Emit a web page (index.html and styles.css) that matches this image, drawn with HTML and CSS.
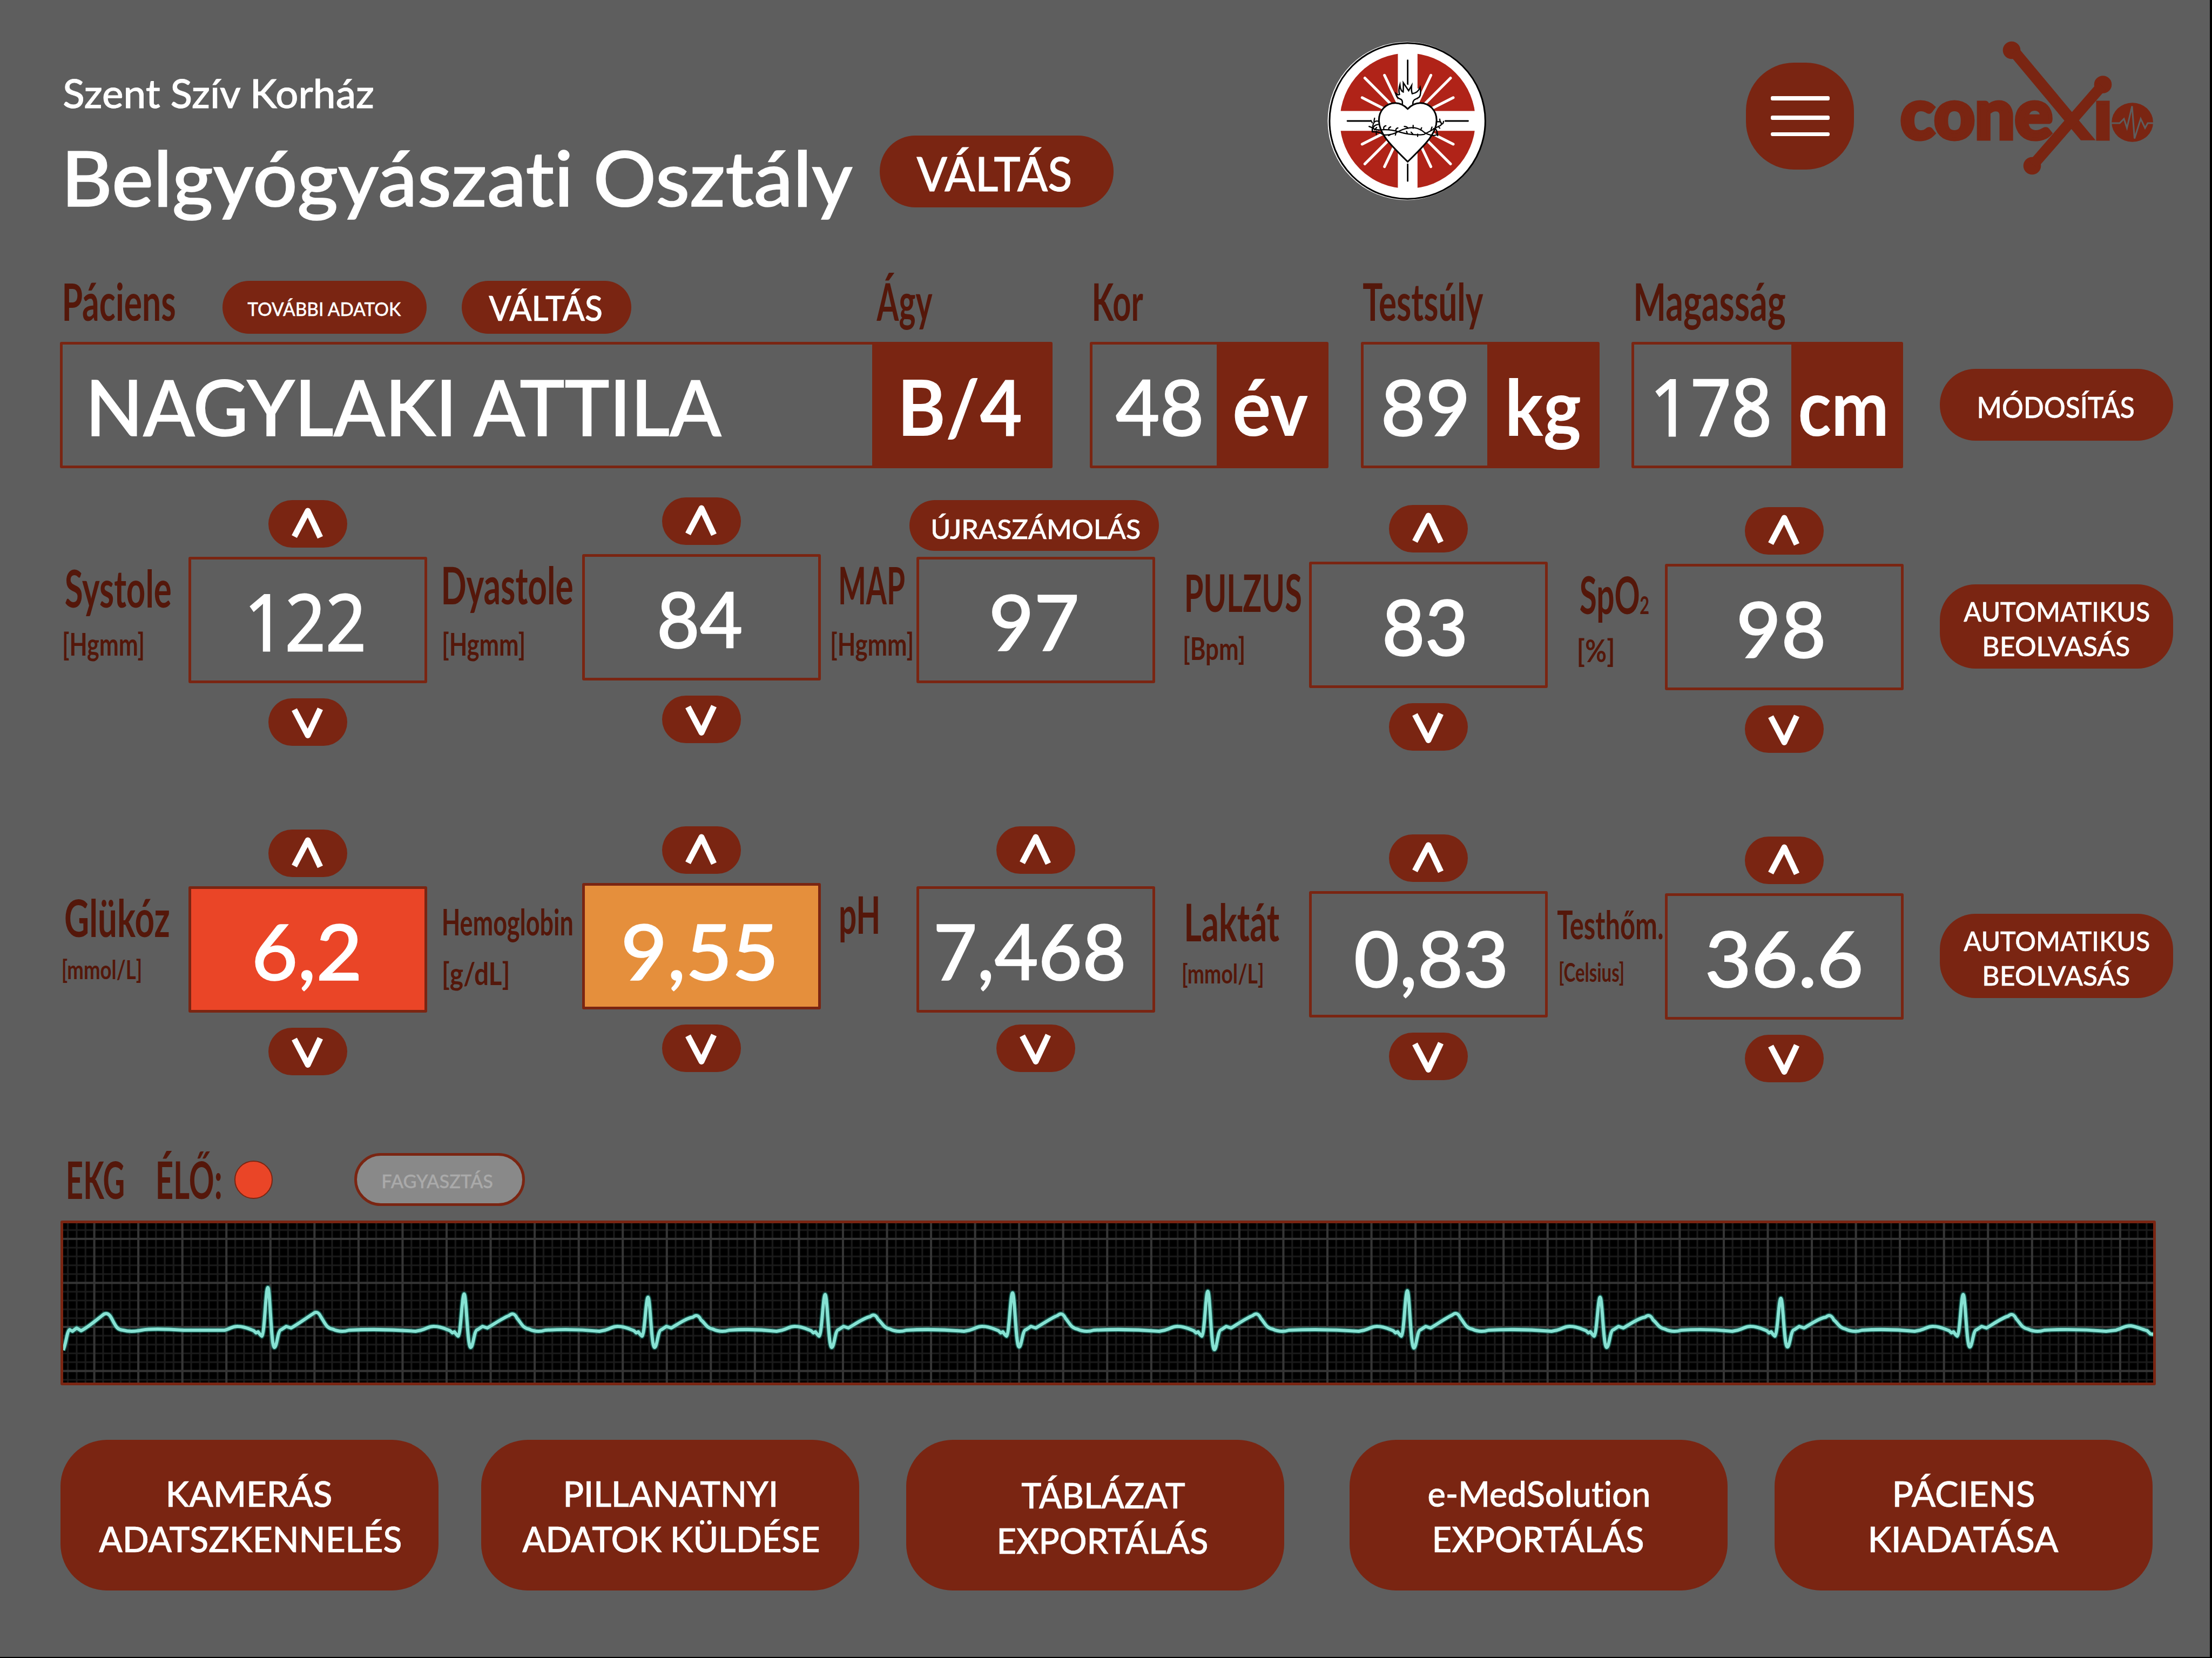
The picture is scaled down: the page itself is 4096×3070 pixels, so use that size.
FILE: index.html
```html
<!DOCTYPE html>
<html lang="hu">
<head>
<meta charset="utf-8">
<title>Conexio – Belgyógyászati Osztály</title>
<link rel="stylesheet" href="styles.css">
</head>
<body>
<svg class="defs" width="0" height="0" aria-hidden="true">
  <symbol id="up" viewBox="0 0 146 88"><path d="M48 67.5 L73 20 L96 69" fill="none" stroke="#fff" stroke-width="11" stroke-linejoin="round"/></symbol>
  <symbol id="down" viewBox="0 0 146 88"><path d="M48 21 L73 68.5 L96 19.500" fill="none" stroke="#fff" stroke-width="11" stroke-linejoin="round"/></symbol>
</svg>
<main class="screen">
  <header class="header">
    <div class="titles">
      <p class="hospital"><span data-w="575">Szent Szív Korház</span></p>
      <h1 class="ward"><span data-w="1454">Belgyógyászati Osztály</span></h1>
    </div>
    <button class="pill ward-switch"><span data-w="286">VÁLTÁS</span></button>
    <svg class="emblem" viewBox="127 123 1163 1164">
      <circle cx="708" cy="705" r="580" fill="#fff"/>
      <circle cx="713" cy="705" r="571" fill="#fff" stroke="#000" stroke-width="12"/>
      <circle cx="715" cy="704" r="497" fill="#b02318"/>
      <path d="M643 180h144v452h450v145H787v450H643V777H190V632h453z" fill="#fff"/>
      <g stroke="#fff" stroke-width="20" stroke-linecap="round">
        <path d="M545 370 L660 610 M401 390 L620 610 M381 534 L560 625 M885 370 L770 610 M1029 390 L810 610 M1049 534 L870 625"/>
        <path d="M381 875 L560 785 M401 1020 L620 800 M545 1040 L640 840 M1049 875 L870 785 M1029 1020 L810 800 M885 1040 L790 840"/>
      </g>
      <g fill="none" stroke="#000" stroke-width="11" stroke-linecap="round" stroke-linejoin="round">
        <path d="M715 260V445 M715 1022V1145 M273 705H445 M991 705H1158"/>
        <path fill="#fff" stroke="none" d="M680 590 Q680 540 640 530 L640 510 L690 430 L800 470 L808 510 L755 560 L752 590z"/>
        <path fill="#fff" stroke-miterlimit="8" stroke-linejoin="miter" stroke-width="10" d="M676 585 Q680 550 662 545 Q635 538 628 503 Q645 518 655 510 Q646 480 658 440 Q662 485 682 492 Q684 460 683 425 L722 483 L744 445 Q740 480 748 505 Q790 500 806 458 Q816 505 800 530 Q785 540 765 549 Q752 560 753 580"/>
        <path fill="#fff" stroke-width="12" d="M715 617 C690 590 660 573 625 573 C555 573 504 630 504 700 C504 800 590 880 715 1004 C840 880 927 800 927 700 C927 630 876 573 806 573 C770 573 740 590 715 617z"/>
        <g stroke-width="9">
          <path d="M500 707 Q470 700 462 730 Q448 770 500 770 M498 730 Q455 735 455 785 M455 785 Q500 780 535 805 Q590 815 650 780 Q750 730 820 775 Q850 805 905 812 L935 805"/>
          <path d="M500 772 Q580 762 650 785 Q750 815 835 803 Q890 775 940 745 Q975 735 955 710 L930 710 M905 760 Q935 765 930 800"/>
          <path d="M446 702 L455 718 M472 685 L468 708 M432 745 L462 757 M487 753 L472 770 M485 805 L485 780 M455 785 L455 760 M540 765 Q535 745 555 740 M577 768 Q572 755 590 748 M628 773 Q628 760 643 756 M690 745 Q710 745 717 758 M755 737 V758 M817 755 L810 770 M893 750 L885 775 M707 782 L712 797 M740 787 L752 800 M788 802 V818 M575 812 L590 804 M630 787 L625 808 M950 692 L953 712 M978 708 Q975 730 962 728 M940 745 L950 758 M935 812 L930 790"/>
        </g>
      </g>
    </svg>
    <button class="menu" aria-label="Menü"><i></i><i></i><i></i></button>
    <svg class="logo" viewBox="3512 66 480 266">
      <defs><clipPath id="leg"><rect x="3512" y="66" width="480" height="193.800"/></clipPath></defs>
      <g fill="#7a2512" stroke="none">
        <circle cx="3724" cy="93" r="16.300"/><circle cx="3893" cy="156.500" r="16.300"/><circle cx="3762" cy="307" r="16.300"/>
        <text class="logo-text" x="3518" y="257" textLength="282" lengthAdjust="spacingAndGlyphs">cone</text>
        <text class="logo-text" x="3876" y="257" textLength="34" lengthAdjust="spacingAndGlyphs">ı</text>
        <ellipse cx="3947.600" cy="226.500" rx="38.400" ry="36.300"/>
      </g>
      <path clip-path="url(#leg)" d="M3729 96 L3881 278" stroke="#7a2512" stroke-width="21"/>
      <path d="M3891 159 L3764 305" stroke="#7a2512" stroke-width="20"/>
      <path d="M3908 228h16l8-8 5.500 17L3947 196.500l4.500 60L3963 220l8 17 5-9h11" fill="none" stroke="#5e5e5e" stroke-width="3"/>
    </svg>
  </header>

  <section class="patient">
    <div class="field name">
      <div class="head">
        <span class="label" data-w="205">Páciens</span>
        <button class="pill more"><span data-w="286">TOVÁBBI ADATOK</span></button>
        <button class="pill swap"><span data-w="209">VÁLTÁS</span></button>
        <span class="label bed" data-w="104">Ágy</span>
      </div>
      <div class="box"><div class="value"><span data-w="1172">NAGYLAKI ATTILA</span></div><div class="unit"><span data-w="218">B/4</span></div></div>
    </div>
    <div class="field age">
      <div class="head"><span class="label" data-w="91">Kor</span></div>
      <div class="box"><div class="value"><span data-w="158">48</span></div><div class="unit"><span data-w="136">év</span></div></div>
    </div>
    <div class="field weight">
      <div class="head"><span class="label" data-w="223">Testsúly</span></div>
      <div class="box"><div class="value"><span data-w="153">89</span></div><div class="unit"><span data-w="132">kg</span></div></div>
    </div>
    <div class="field height">
      <div class="head"><span class="label" data-w="277">Magasság</span></div>
      <div class="box"><div class="value"><span class="plain" data-w="210">178</span></div><div class="unit"><span data-w="158">cm</span></div></div>
    </div>
    <button class="pill modify"><span data-w="288">MÓDOSÍTÁS</span></button>
  </section>

  <section class="vitals">
    <div class="caption systole"><span class="label" data-w="195">Systole</span><span class="measure" data-w="147">[Hgmm]</span></div>
    <div class="stepper systole"><button class="step"><svg><use href="#up"/></svg></button><div class="reading"><span class="plain" data-w="210">122</span></div><button class="step"><svg><use href="#down"/></svg></button></div>
    <div class="caption diastole"><span class="label" data-w="239">Dyastole</span><span class="measure" data-w="149">[Hgmm]</span></div>
    <div class="stepper diastole"><button class="step"><svg><use href="#up"/></svg></button><div class="reading"><span data-w="152">84</span></div><button class="step"><svg><use href="#down"/></svg></button></div>
    <div class="caption map"><span class="label" data-w="119">MAP</span><span class="measure" data-w="149">[Hgmm]</span></div>
    <div class="stepper map"><button class="pill recalc"><span data-w="384">ÚJRASZÁMOLÁS</span></button><div class="reading"><span data-w="158">97</span></div></div>
    <div class="caption pulse"><span class="label" data-w="212">PULZUS</span><span class="measure" data-w="110">[Bpm]</span></div>
    <div class="stepper pulse"><button class="step"><svg><use href="#up"/></svg></button><div class="reading"><span data-w="148">83</span></div><button class="step"><svg><use href="#down"/></svg></button></div>
    <div class="caption oxygen"><div class="formula"><span class="label" data-w="109">SpO</span><span class="sub" data-w="16">2</span></div><span class="measure" data-w="64">[%]</span></div>
    <div class="stepper oxygen"><button class="step"><svg><use href="#up"/></svg></button><div class="reading"><span data-w="155">98</span></div><button class="step"><svg><use href="#down"/></svg></button></div>
    <button class="pill auto"><span data-w="344">AUTOMATIKUS</span><span data-w="269">BEOLVASÁS</span></button>
  </section>

  <section class="vitals labs">
    <div class="caption glucose"><span class="label" data-w="192">Glükóz</span><span class="measure" data-w="145">[mmol/L]</span></div>
    <div class="stepper glucose"><button class="step"><svg><use href="#up"/></svg></button><div class="reading critical"><span data-w="192">6,2</span></div><button class="step"><svg><use href="#down"/></svg></button></div>
    <div class="caption hemoglobin"><span class="label" data-w="239">Hemoglobin</span><span class="measure" data-w="120">[g/dL]</span></div>
    <div class="stepper hemoglobin"><button class="step"><svg><use href="#up"/></svg></button><div class="reading warning"><span data-w="278">9,55</span></div><button class="step"><svg><use href="#down"/></svg></button></div>
    <div class="caption ph"><span class="label" data-w="70">pH</span></div>
    <div class="stepper ph"><button class="step"><svg><use href="#up"/></svg></button><div class="reading"><span data-w="346">7,468</span></div><button class="step"><svg><use href="#down"/></svg></button></div>
    <div class="caption lactate"><span class="label" data-w="172">Laktát</span><span class="measure" data-w="147">[mmol/L]</span></div>
    <div class="stepper lactate"><button class="step"><svg><use href="#up"/></svg></button><div class="reading"><span data-w="277">0,83</span></div><button class="step"><svg><use href="#down"/></svg></button></div>
    <div class="caption temp"><span class="label" data-w="195">Testhőm.</span><span class="measure" data-w="118">[Celsius]</span></div>
    <div class="stepper temp"><button class="step"><svg><use href="#up"/></svg></button><div class="reading"><span data-w="285">36.6</span></div><button class="step"><svg><use href="#down"/></svg></button></div>
    <button class="pill auto"><span data-w="344">AUTOMATIKUS</span><span data-w="269">BEOLVASÁS</span></button>
  </section>

  <section class="ecg">
    <div class="ecg-head">
      <span class="label" data-w="103">EKG</span>
      <span class="label live" data-w="117">ÉLŐ:</span>
      <i class="dot"></i>
      <button class="pill freeze"><span data-w="203">FAGYASZTÁS</span></button>
    </div>
    <svg class="monitor" viewBox="117 2265 3870 295" preserveAspectRatio="none">
      <defs>
        <pattern id="minor" x="174.600" y="2293.900" width="16.310" height="16.310" patternUnits="userSpaceOnUse"><path d="M0 0H16.310M0 0V16.310M16.310 0V16.310M0 16.310H16.310" stroke="#1b1b1b" stroke-width="3"/></pattern>
        <pattern id="major" x="174.600" y="2293.900" width="81.550" height="81.550" patternUnits="userSpaceOnUse"><path d="M0 0H81.550M0 0V81.550M81.550 0V81.550M0 81.550H81.550" stroke="#353535" stroke-width="4"/></pattern>
      </defs>
      <rect x="117" y="2265" width="3870" height="295" fill="#000"/>
      <rect x="117" y="2265" width="3870" height="295" fill="url(#minor)"/>
      <rect x="117" y="2265" width="3870" height="295" fill="url(#major)"/>
      <path class="glow trace"/>
      <path class="trace"/>
    </svg>
  </section>

  <footer class="actions">
    <button class="action"><span data-w="303">KAMERÁS</span><span data-w="560">ADATSZKENNELÉS</span></button>
    <button class="action send"><span data-w="389">PILLANATNYI</span><span data-w="550">ADATOK KÜLDÉSE</span></button>
    <button class="action table"><span data-w="304">TÁBLÁZAT</span><span data-w="386">EXPORTÁLÁS</span></button>
    <button class="action med"><span data-w="408">e-MedSolution</span><span data-w="387">EXPORTÁLÁS</span></button>
    <button class="action discharge"><span data-w="259">PÁCIENS</span><span data-w="349">KIADATÁSA</span></button>
  </footer>
</main>
<script src="app.js"></script>
</body>
</html>
```
FILE: styles.css
```css
* { box-sizing: border-box; margin: 0; padding: 0; }
html, body { background: #5e5e5e; }
body { font-family: "Lato", "Open Sans", sans-serif; font-weight: 500; color: #fff; font-variant-ligatures: none; }
button { font: inherit; font-variant-ligatures: none; color: inherit; border: 0; flex: none; }
.defs { display: block; }
[data-w] { display: inline-block; white-space: nowrap; transform-origin: 0 50%; flex: none; -webkit-text-stroke: 0.011em currentColor; }

.screen {
  width: 4096px; height: 3070px; overflow: hidden;
  background: #5e5e5e; border-right: 4px solid #000; border-bottom: 2px solid #000;
}

.pill {
  display: flex; flex-direction: column; align-items: center; justify-content: center;
  background: #7a2512; border-radius: 66px;
}

/* header */
.header { display: flex; align-items: flex-start; height: 500px; }
.titles { width: 1629px; padding: 128px 0 0 118px; flex: none; }
.hospital { font-size: 73px; line-height: 88px; }
.ward { margin-top: 26px; font-size: 142px; line-height: 170px; font-weight: 500; padding-left: 7px; }
.ward-switch { width: 433px; height: 133px; margin-top: 251px; padding: 6px 11px 0 0; font-size: 86px; line-height: 86px; }
.emblem { width: 294px; height: 294px; margin: 77px 0 0 396px; flex: none; }
.menu {
  display: flex; flex-direction: column; justify-content: flex-start; align-items: stretch;
  width: 200px; height: 198px; margin: 116px 0 0 481px; border-radius: 89px; background: #7a2512;
  padding: 62px 45px 0 46px;
}
.menu i { display: block; height: 7.500px; border-radius: 3px; background: #fff; margin-bottom: 28.500px; flex: none; }
.menu i + i { margin-bottom: 23px; }
.logo { width: 480px; height: 266px; margin: 66px 0 0 80px; flex: none; }
.logo-text { font-family: "Lato", sans-serif; font-weight: 900; font-size: 129px; stroke: #7a2512; stroke-width: 7px; }

/* patient data */
.patient { display: flex; align-items: flex-start; height: 367px; padding-left: 111px; }
.field { flex: none; }
.head { display: flex; align-items: flex-start; height: 133px; }
.label { font-size: 95px; line-height: 114px; font-weight: 700; color: #54170a; }
.box { display: flex; height: 233.500px; border: 5px solid #7a2512; border-radius: 3px; font-size: 144px; line-height: 173px; }
.value, .unit { padding-top: 27px; }
.value { flex: 1; }
.unit { background: #7a2512; font-weight: 700; flex: none; }
.unit [data-w], .label[data-w], .measure[data-w], .sub[data-w] { -webkit-text-stroke-width: 0; }
.plain[data-w] { font-family: "Open Sans", sans-serif; -webkit-text-stroke-width: 0.022em; }
.name { width: 1838px; }
.name .head { padding-left: 8px; }
.more { width: 378px; height: 98px; margin: 20px 0 0 88px; padding-top: 5px; font-size: 35.500px; line-height: 40px; }
.swap { width: 314px; height: 98px; margin: 20px 0 0 65px; padding-right: 3px; font-size: 63px; line-height: 63px; }
.bed { margin-left: 454px; }
.name .value { padding-left: 53px; }
.name .unit { width: 329px; padding-left: 57px; }
.age { width: 442px; margin-left: 69px; }
.age .head, .height .head { padding-left: 8px; }
.age .value { padding-left: 43px; }
.age .unit { width: 202px; padding-left: 33px; }
.weight { width: 442px; margin-left: 60px; }
.weight .head { padding-left: 4px; }
.weight .value { padding-left: 37px; }
.weight .unit { width: 203px; padding-left: 40px; }
.height { width: 503px; margin-left: 59px; }
.height .value { padding-left: 40px; }
.height .unit { width: 202px; padding-left: 16px; }
.modify { width: 432px; height: 133px; margin: 183px 0 0 68px; padding-top: 8px; font-size: 54px; line-height: 54px; }

/* vital signs */
.vitals {
  display: grid; align-items: start; height: 610px; margin-top: 53px; padding-left: 111px;
  grid-template-columns: 237.500px 442.500px 287px 442px 177px 442px 284.500px 442.500px 217px 442px 67px 432px;
}
.labs { height: 596px; margin-top: 0; }
.stepper { display: flex; flex-direction: column; align-items: center; }
.step { width: 146px; height: 88px; border-radius: 44px; background: #7a2512; }
.step svg { display: block; width: 146px; height: 88px; }
.reading {
  width: 442px; height: 234px; margin: 17px 0 28px; padding-top: 27px; border: 5px solid #7a2512; border-radius: 3px;
  font-size: 144px; line-height: 173px;
}
.critical { background: #ea4527; }
.warning { background: #e58f3c; }
.caption { display: flex; flex-direction: column; align-items: flex-start; }
.measure { font-size: 58px; line-height: 70px; font-weight: 700; color: #54170a; margin-top: 12px; }

.caption.systole { padding: 111px 0 0 10px; }
.systole .measure { margin-left: -3px; }
.stepper.systole { padding-top: 6px; }
.systole .reading { padding-left: 109px; }
.caption.diastole { padding: 105px 0 0 30px; }
.diastole .measure, .map .measure { margin-top: 18px; }
.stepper.diastole { padding-top: 1px; }
.diastole .reading { padding-left: 138px; }
.caption.map { padding: 105px 0 0 36px; }
.map .measure { margin-left: -16px; }
.stepper.map { padding-top: 6px; }
.map .reading { margin-top: 11px; padding-left: 135px; }
.recalc { width: 462px; height: 94px; align-self: flex-start; margin-left: -13px; padding: 11px 0 0 8px; font-size: 51px; line-height: 51px; }
.caption.pulse { padding: 119px 0 0 58px; }
.pulse .measure { margin-left: -4px; }
.stepper.pulse { padding-top: 15px; }
.pulse .reading { padding-left: 135px; }
.caption.oxygen { padding: 123px 0 0 60px; }
.formula { display: flex; align-items: baseline; gap: 2px; }
.sub { font-size: 46px; line-height: 60px; font-weight: 700; color: #54170a; }
.oxygen .measure { margin-left: -3px; }
.stepper.oxygen { padding-top: 19px; }
.oxygen .reading { padding-left: 133px; }
.auto { grid-column: 12; width: 432px; height: 156px; margin-top: 162px; padding-top: 7px; font-size: 51px; line-height: 64px; }

.caption.glucose { padding: 111px 0 0 10px; }
.glucose .measure { margin: 5px 0 0 -5px; font-size: 48px; }
.stepper.glucose { padding-top: 6px; }
.glucose .reading { padding-left: 118px; }
.caption.hemoglobin { padding: 119px 0 0 30px; }
.hemoglobin .label { font-size: 67px; }
.hemoglobin .measure { margin-top: 4px; }
.stepper.hemoglobin { padding-top: 0; }
.hemoglobin .reading { padding: 33px 0 0 73px; }
.caption.ph { padding: 105px 0 0 36px; }
.ph .reading { margin: 23px 0 22px; padding-left: 32px; }
.caption.lactate { padding: 119px 0 0 58px; }
.lactate .measure { margin: 4px 0 0 -6px; font-size: 50px; }
.stepper.lactate { padding-top: 15px; }
.lactate .reading { padding: 31px 0 0 81px; }
.caption.temp { padding: 124px 0 0 18px; }
.temp .label { font-size: 73px; }
.temp .measure { margin: -3px 0 0 4px; font-size: 48px; }
.stepper.temp { padding-top: 19px; }
.temp .reading { padding-left: 73px; }

/* ECG */
.ecg-head { display: flex; align-items: flex-start; height: 134px; padding-left: 126px; }
.live { margin-left: 63px; }
.dot { width: 71px; height: 71px; margin: 23px 0 0 25px; border: 2px solid #7a2512; border-radius: 50%; background: #ea4527; }
.freeze {
  width: 316px; height: 98px; margin: 9px 0 0 151px; padding: 5px 8px 0 0; border: 5px solid #7a2512; border-radius: 49px;
  background: #898989; color: #aaa; font-size: 35.500px; line-height: 40px;
}
.monitor { display: block; width: 3880px; height: 305px; margin-left: 112px; border: 5px solid #7a2512; border-radius: 3px; background: #000; }
.trace { fill: none; stroke: #86e2d3; stroke-width: 6; stroke-linejoin: round; }
.glow { stroke: #1d8f80; stroke-width: 10; opacity: .5; }

/* actions */
.actions { display: flex; padding: 101px 0 0 112px; }
.action {
  display: flex; flex-direction: column; align-items: center; justify-content: center;
  width: 700px; height: 279px; padding: 3px 0 0 2px; border-radius: 86px; background: #7a2512; font-size: 66px; line-height: 83.600px;
}
.send { margin-left: 79px; }
.table { margin-left: 87px; padding: 9px 0 0 29px; }
.med { margin-left: 121px; padding-left: 0; }
.discharge { margin-left: 87px; }
```
FILE: app.js
```js
// Condense or widen every label so that its ink fills the width given in data-w.
const ctx = document.createElement('canvas').getContext('2d');
document.querySelectorAll('[data-w]').forEach((el) => {
  const cs = getComputedStyle(el);
  ctx.font = `${cs.fontWeight} ${cs.fontSize} ${cs.fontFamily}`;
  ctx.letterSpacing = '0.01px'; // spaced text is measured without ligatures
  const m = ctx.measureText(el.textContent);
  const target = Number(el.dataset.w);
  const stroke = parseFloat(cs.webkitTextStrokeWidth) || 0;
  const scale = target / (m.actualBoundingBoxRight + m.actualBoundingBoxLeft + stroke);
  el.style.marginRight = `${target - el.offsetWidth}px`;
  el.style.transform = `translateX(${(m.actualBoundingBoxLeft + stroke / 2) * scale}px) scaleX(${scale})`;
});

// ECG trace: [x of the R wave, y of its peak, y of the S wave, y of the T wave]
const beats = [
  [496, 2384, 2495, 2429], [859.5, 2396, 2495, 2432], [1200, 2402, 2495, 2435], [1528, 2397, 2495, 2434],
  [1875, 2394, 2494, 2432], [2236.6, 2391, 2499, 2432], [2606, 2390, 2496, 2431], [2963, 2402, 2495, 2435],
  [3297.7, 2404, 2494, 2435], [3635.4, 2397, 2494, 2433],
];
let d = 'M117 2500 C122 2490 124 2464 129 2462 L134 2465 L142 2459 L150 2464 C160 2460 180 2443 189 2436 Q199 2427 206 2440 C214 2455 216 2462 228 2463 Q242 2467 262 2463 T340 2463 L405 2463';
beats.forEach(([x, r, s, t], i) => {
  d += ` L${x - 80} 2463 C${x - 68} 2460 ${x - 65} 2455 ${x - 55} 2456 C${x - 44} 2456 ${x - 34} 2461 ${x - 26} 2464`
    + ` L${x - 22} 2468 L${x - 18} 2466 Q${x - 14} 2472 ${x - 11} 2474`
    + ` C${x - 6} 2470 ${x - 4} ${r} ${x} ${r} C${x + 4} ${r} ${x + 6} ${s} ${x + 12} ${s}`
    + ` C${x + 17} ${s} ${x + 18} 2462 ${x + 25} 2462 L${x + 34} 2456 L${x + 43} 2459`
    + ` C${x + 55} 2452 ${x + 72} 2440 ${x + 83} ${t + 4} Q${x + 92} ${t - 4} ${x + 98} ${t + 9}`
    + ` C${x + 106} 2450 ${x + 108} 2459 ${x + 120} 2461 Q${x + 135} 2468 ${x + 150} 2463`;
  const next = i < beats.length - 1 ? beats[i + 1][0] - 90 : 3900;
  d += ` Q${(x + 150 + next) / 2} 2460 ${next} 2465`;
});
d += ' L3918 2463 C3930 2460 3934 2454 3946 2455 C3958 2457 3968 2462 3976 2464 L3982 2470 L3990 2471';
document.querySelectorAll('.trace').forEach((p) => p.setAttribute('d', d));
```
